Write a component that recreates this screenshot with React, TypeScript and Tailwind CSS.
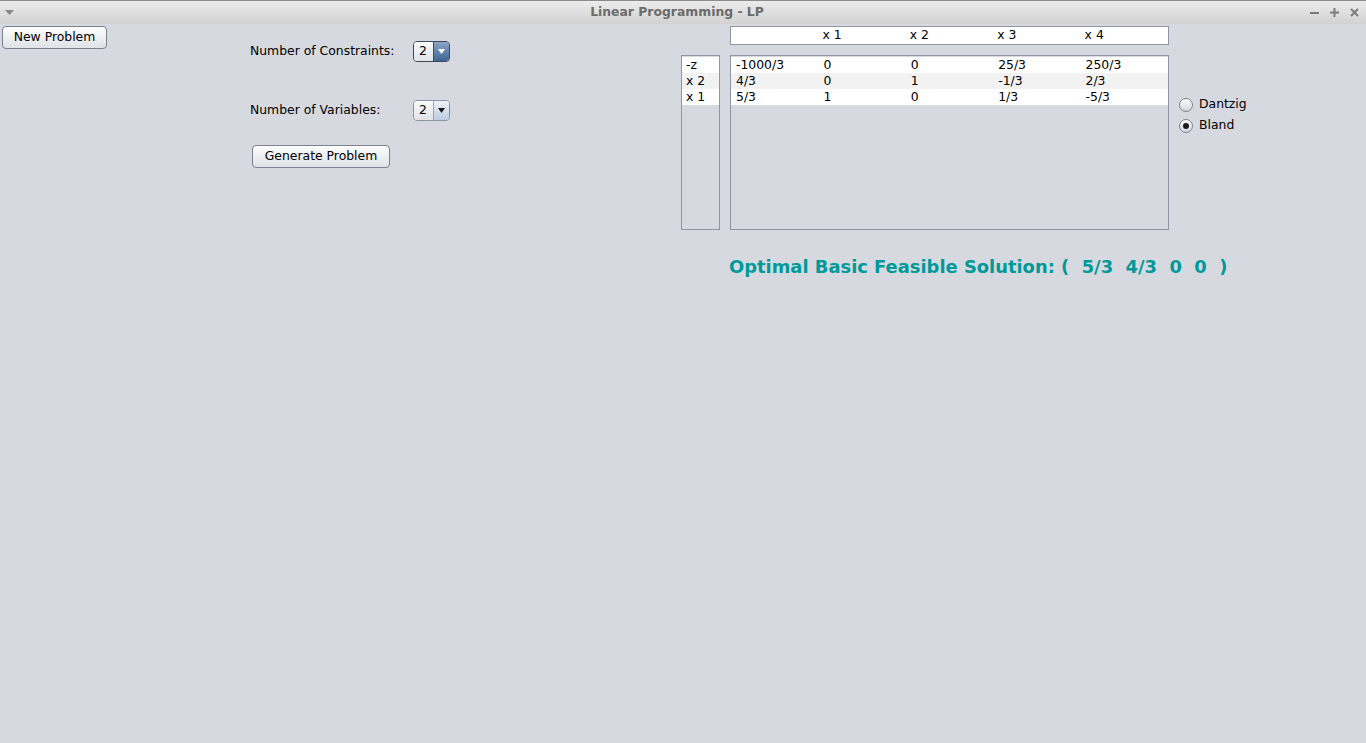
import React from "react";

const font = { fontFamily: '"DejaVu Sans", Verdana, sans-serif' };

const columns = ["x 1", "x 2", "x 3", "x 4"];
const basis = ["-z", "x 2", "x 1"];
const rows = [
  ["-1000/3", "0", "0", "25/3", "250/3"],
  ["4/3", "0", "1", "-1/3", "2/3"],
  ["5/3", "1", "0", "1/3", "-5/3"],
];

function Combo({ focused }: { focused?: boolean }) {
  return (
    <div
      className={`flex h-[21px] w-[37px] overflow-hidden rounded-[4px] border ${
        focused ? "border-[#3c4a5c]" : "border-[#8a94a3]"
      }`}
    >
      <div className="flex flex-1 items-center bg-gradient-to-b from-[#fbfbfc] to-[#e0e3e8] pl-[5px] text-[12.4px] text-black">
        2
      </div>
      <div
        className={`flex w-[16px] items-center justify-center border-l ${
          focused
            ? "border-[#3c4a5c] bg-gradient-to-b from-[#8aa6c6] to-[#3f6594]"
            : "border-[#9aa3b0] bg-gradient-to-b from-[#eef2f7] to-[#bccde0]"
        }`}
      >
        <svg width="7" height="5" viewBox="0 0 7 5">
          <path d="M0 0h7L3.5 5z" fill={focused ? "#ffffff" : "#1a1a1a"} />
        </svg>
      </div>
    </div>
  );
}

function Button({ children, className = "" }: { children: React.ReactNode; className?: string }) {
  return (
    <button
      className={`block h-[23px] rounded-[4px] border border-[#7a8290] bg-gradient-to-b from-[#fdfdfd] to-[#dfe2e7] text-[12.4px] text-black ${className}`}
    >
      {children}
    </button>
  );
}

function Radio({ label, checked }: { label: string; checked?: boolean }) {
  return (
    <div className="flex h-[21px] items-center gap-[6px]">
      <div className="flex h-[14px] w-[14px] items-center justify-center rounded-full border border-[#7d8591] bg-gradient-to-b from-[#fdfdfd] to-[#d3d7de]">
        {checked && <div className="h-[6px] w-[6px] rounded-full bg-[#1a1a1a]" />}
      </div>
      <span className="text-[12.4px] text-black">{label}</span>
    </div>
  );
}

export default function App() {
  return (
    <div className="flex h-[743px] w-[1366px] flex-col bg-[#d6d9df]" style={font}>
      {/* title bar */}
      <div className="flex h-[24px] shrink-0 items-center border-t border-[#8c8c8c] bg-gradient-to-b from-[#ececec] to-[#d2d2d2] px-[5px]">
        <svg width="9" height="5" viewBox="0 0 9 5">
          <path d="M0 0h9L4.5 5z" fill="#8a8a8a" />
        </svg>
        <div className="flex-1 pl-[30px] text-center text-[12.4px] font-bold text-[#6b6b6b]">
          Linear Programming - LP
        </div>
        <div className="flex items-center gap-[11px] pr-[2px]">
          <svg width="9" height="9" viewBox="0 0 9 9">
            <path d="M0 5h9" stroke="#7a7a7a" strokeWidth="2" />
          </svg>
          <svg width="9" height="9" viewBox="0 0 9 9">
            <path d="M0 4.5h9M4.5 0v9" stroke="#7a7a7a" strokeWidth="2" />
          </svg>
          <svg width="9" height="9" viewBox="0 0 9 9">
            <path d="M1 1l7 7M8 1l-7 7" stroke="#7a7a7a" strokeWidth="1.8" />
          </svg>
        </div>
      </div>

      <div className="flex flex-1">
        {/* left */}
        <div className="w-[250px] pl-[2px] pt-[2px]">
          <Button className="w-[105px]">New Problem</Button>
        </div>

        {/* settings */}
        <div className="w-[431px] pt-[17px]">
          <div className="flex h-[21px] items-center">
            <span className="w-[163px] text-[12.4px] text-black">Number of Constraints:</span>
            <Combo focused />
          </div>
          <div className="mt-[38px] flex h-[21px] items-center">
            <span className="w-[163px] text-[12.4px] text-black">Number of Variables:</span>
            <Combo />
          </div>
          <Button className="ml-[2px] mt-[24px] w-[138px]">Generate Problem</Button>
        </div>

        {/* tableau */}
        <div className="flex flex-col pt-[2px]">
          <div className="flex">
            <div className="w-[49px]" />
            <div className="flex h-[19px] w-[439px] items-center border border-[#8f96a1] bg-white text-[12.4px] text-black">
              <div className="w-[87.6px]" />
              {columns.map((c) => (
                <div key={c} className="w-[87.6px] pl-[4px]">
                  {c}
                </div>
              ))}
            </div>
          </div>
          <div className="mt-[10px] flex">
            <div className="h-[175px] w-[39px] border border-[#8f96a1] pt-[1px] text-[12.4px] text-black">
              {basis.map((b) => (
                <div key={b} className={`h-[16px] pl-[4px] leading-[16px] ${b === "x 2" ? "bg-[#f2f2f2]" : "bg-white"}`}>
                  {b}
                </div>
              ))}
            </div>
            <div className="ml-[10px] h-[175px] w-[439px] border border-[#8f96a1] pt-[1px] text-[12.4px] text-black">
              {rows.map((r, i) => (
                <div key={i} className={`flex h-[16px] leading-[16px] ${i === 1 ? "bg-[#f2f2f2]" : "bg-white"}`}>
                  {r.map((v, j) => (
                    <div key={j} className="w-[87.4px] pl-[5px]">
                      {v}
                    </div>
                  ))}
                </div>
              ))}
            </div>
            <div className="ml-[10px] pt-[39px]">
              <Radio label="Dantzig" />
              <Radio label="Bland" checked />
            </div>
          </div>
          <div className="ml-[48px] mt-[24px] whitespace-pre text-[17.9px] font-bold text-[#009999]">
            Optimal Basic Feasible Solution: (  5/3  4/3  0  0  )
          </div>
        </div>
      </div>
    </div>
  );
}
